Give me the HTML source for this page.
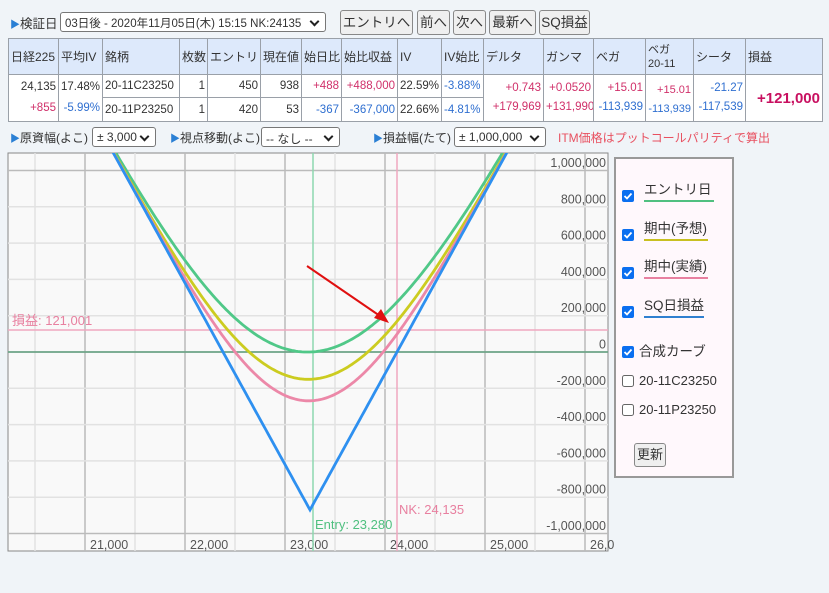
<!DOCTYPE html><html><head><meta charset="utf-8"><style>
*{box-sizing:border-box;margin:0;padding:0}
body{width:829px;height:593px;background:#f0f4f8;font-family:"Liberation Sans","Noto Sans CJK JP",sans-serif;font-size:12.5px;color:#333;position:relative;overflow:hidden}
.a{position:absolute;white-space:nowrap}
.tri{color:#2a7fd4;font-size:10px}
.sel{position:absolute;border:1px solid #777;border-radius:3px;background:#fff;height:20px;font-size:12px;padding:2px 4px;white-space:nowrap;overflow:hidden}
.sel:after{content:"";position:absolute;right:7px;top:5px;width:5px;height:5px;border-right:2px solid #222;border-bottom:2px solid #222;transform:rotate(45deg)}
.btn{position:absolute;border:1px solid #888;border-radius:3px;background:#efefef;height:25px;font-size:13.5px;text-align:center;line-height:23px;white-space:nowrap;overflow:hidden}
table{position:absolute;left:8px;top:38px;border-collapse:collapse;font-size:11.5px;background:#fff;table-layout:fixed;width:814px}
td,th{border:1px solid #9aa0a8;font-weight:normal;padding:0 2px;white-space:nowrap;overflow:hidden}
th{background:#dde9fb;text-align:left;height:36px;font-size:12px}
td{height:23px;text-align:right}
.r{color:#d0306a}.b{color:#2f6fd0}
</style></head><body>
<div class="a" style="left:10px;top:13px"><span class="tri">▶</span>検証日</div>
<div class="sel" style="left:60px;top:12px;width:266px;font-size:11.5px">03日後 - 2020年11月05日(木) 15:15 NK:24135</div>
<div class="btn" style="left:340px;top:10px;width:73px">エントリへ</div>
<div class="btn" style="left:417px;top:10px;width:33px">前へ</div>
<div class="btn" style="left:453px;top:10px;width:33px">次へ</div>
<div class="btn" style="left:489px;top:10px;width:47px">最新へ</div>
<div class="btn" style="left:539px;top:10px;width:51px">SQ損益</div>
<table>
<colgroup><col style="width:50px"><col style="width:44px"><col style="width:77px"><col style="width:28px"><col style="width:53px"><col style="width:41px"><col style="width:40px"><col style="width:56px"><col style="width:44px"><col style="width:42px"><col style="width:60px"><col style="width:50px"><col style="width:52px"><col style="width:48px"><col style="width:52px"><col style="width:77px"></colgroup>
<tr><th>日経225</th><th>平均IV</th><th>銘柄</th><th>枚数</th><th>エントリ</th><th>現在値</th><th>始日比</th><th>始比収益</th><th>IV</th><th>IV始比</th><th>デルタ</th><th>ガンマ</th><th>ベガ</th><th style="font-size:11px;line-height:14px">ベガ<br>20-11</th><th>シータ</th><th>損益</th></tr>
<tr><td rowspan="2" style="line-height:21px">24,135<br><span class="r">+855</span></td><td rowspan="2" style="line-height:21px">17.48%<br><span class="b">-5.99%</span></td><td style="text-align:left">20-11C23250</td><td>1</td><td>450</td><td>938</td><td class="r">+488</td><td class="r">+488,000</td><td>22.59%</td><td class="b" style="text-align:left">-3.88%</td><td rowspan="2" style="line-height:19px"><span class="r">+0.743</span><br><span class="r">+179,969</span></td><td rowspan="2" style="line-height:19px"><span class="r">+0.0520</span><br><span class="r">+131,990</span></td><td rowspan="2" style="line-height:19px"><span class="r">+15.01</span><br><span class="b">-113,939</span></td><td rowspan="2" style="line-height:19px;font-size:11px;padding-top:4px"><span class="r">+15.01</span><br><span class="b">-113,939</span></td><td rowspan="2" style="line-height:19px"><span class="b">-21.27</span><br><span class="b">-117,539</span></td><td rowspan="2" class="r" style="font-size:15px;font-weight:bold;color:#c81060">+121,000</td></tr>
<tr><td style="text-align:left;height:24px">20-11P23250</td><td>1</td><td>420</td><td>53</td><td class="b">-367</td><td class="b">-367,000</td><td>22.66%</td><td class="b" style="text-align:left">-4.81%</td></tr>
</table>
<div class="a" style="left:10px;top:129px;font-size:12px"><span class="tri">▶</span>原資幅(よこ)</div>
<div class="sel" style="left:92px;top:127px;width:64px">± 3,000</div>
<div class="a" style="left:170px;top:129px;font-size:12px"><span class="tri">▶</span>視点移動(よこ)</div>
<div class="sel" style="left:261px;top:127px;width:79px">-- なし --</div>
<div class="a" style="left:373px;top:129px;font-size:12px"><span class="tri">▶</span>損益幅(たて)</div>
<div class="sel" style="left:454px;top:127px;width:92px">± 1,000,000</div>
<div class="a" style="left:558px;top:129px;color:#e85060;font-size:12px">ITM価格はプットコールパリティで算出</div>
<svg class="a" style="left:0;top:0" width="829" height="593" id="ch">
<defs><clipPath id="cp"><rect x="8" y="153" width="600" height="398"/></clipPath></defs>
<rect x="8" y="153" width="600" height="398" fill="#f9f9f9" stroke="#888"/>
<g id="grid"></g>
<g font-size="12.5" fill="#555" text-anchor="end" font-family="Liberation Sans,sans-serif" id="yl"></g>
<g font-size="12.5" fill="#555" font-family="Liberation Sans,sans-serif" id="xl"></g>
<line x1="8" x2="608" y1="330" y2="330" stroke="#f0a8c0" stroke-width="1.5"/>
<line x1="8" x2="608" y1="352" y2="352" stroke="#5a9a78" stroke-width="1.5"/>
<line x1="313" x2="313" y1="153" y2="551" stroke="#8ed8b0" stroke-width="1.5"/>
<line x1="397" x2="397" y1="153" y2="551" stroke="#f0a8c0" stroke-width="1.5"/>
<g id="cv" fill="none" stroke-width="2.8" clip-path="url(#cp)"></g>
<text x="12" y="325" fill="#e880a0" font-size="13">損益: 121,001</text>
<text x="399" y="514" fill="#e880a0" font-size="13">NK: 24,135</text>
<text x="315" y="529" fill="#50c080" font-size="13">Entry: 23,280</text>
<line x1="307" y1="266" x2="380" y2="316" stroke="#e01010" stroke-width="2"/>
<polygon points="389,323 374,318 381,309" fill="#e01010"/>
</svg>
<div class="a" style="left:614px;top:157px;width:120px;height:321px;background:#fff8fc;border:2px solid #999"></div>
<svg class="a" style="left:0;top:0" width="829" height="593" font-size="13.5" fill="#333" font-family="Liberation Sans,Noto Sans CJK JP,sans-serif">
<g id="lg"></g>
</svg>
<div class="btn" style="left:634px;top:443px;width:32px;height:24px;font-size:13px;line-height:22px">更新</div>
<script>
var g=document.getElementById('grid'),s='';
for(var i=0;i<12;i++){var x=35+i*50;if(x>608)break;s+='<line x1="'+x+'" x2="'+x+'" y1="153" y2="551" stroke="'+(i%2?'#bbb':'#e2e2e2')+'" stroke-width="1.5"/>';}
for(var j=0;j<=10;j++){var y=170.5+j*36.3;s+='<line x1="8" x2="608" y1="'+y+'" y2="'+y+'" stroke="'+((j==0||j==10)?'#bbb':'#e2e2e2')+'" stroke-width="1.5"/>';}
g.innerHTML=s;
var yl=['1,000,000','800,000','600,000','400,000','200,000','0','-200,000','-400,000','-600,000','-800,000','-1,000,000'],t='';
for(j=0;j<11;j++)t+='<text x="606" y="'+(167+j*36.3)+'">'+yl[j]+'</text>';
document.getElementById('yl').innerHTML=t;
var xl=['21,000','22,000','23,000','24,000','25,000','26,0'];t='';
for(i=0;i<6;i++)t+='<text x="'+(90+i*100)+'" y="549">'+xl[i]+'</text>';
document.getElementById('xl').innerHTML=t;
function N(x){var k=1/(1+0.2316419*Math.abs(x)),p=1-Math.exp(-x*x/2)/Math.sqrt(2*Math.PI)*k*(0.31938153+k*(-0.356563782+k*(1.781477937+k*(-1.821255978+k*1.330274429))));return x>=0?p:1-p}
function str(S,K,v){if(v==0)return Math.abs(S-K);var d1=(Math.log(S/K)+v*v/2)/v,d2=d1-v;var c=S*N(d1)-K*N(d2);return c+(c-S+K)}
var K=23250,cv='';
[[0.0469,'#50c888'],[0.0388,'#cccc20'],[0.0324,'#ec88a8'],[0,'#2e90f0']].forEach(function(o){var pts=[];for(var x=8;x<=608;x+=2){var S=23000+(x-285)*10;var y=352-(str(S,K,o[0])-870)*0.1815;if(y<100)y=100;pts.push(x+','+y.toFixed(1));}
cv+='<polyline points="'+pts.join(' ')+'" stroke="'+o[1]+'"/>';});
document.getElementById('cv').innerHTML=cv;
var L=[['エントリ日','#50c080',196,714],['期中(予想)','#c8c020',235,708],['期中(実績)','#e880a0',273,708],['SQ日損益','#3080d0',312,704]],h='';
function cb(y,on){return on?'<rect x="622" y="'+(y-6)+'" width="12" height="12" rx="2" fill="#0a6ff0"/><path d="M624.5 '+y+' l2.5 2.5 l4.5 -5" stroke="#fff" stroke-width="1.8" fill="none"/>':'<rect x="622.5" y="'+(y-5.5)+'" width="11" height="11" rx="2" fill="#fff" stroke="#666"/>'}
L.forEach(function(l){h+=cb(l[2],1)+'<text x="644" y="'+(l[2]-2)+'">'+l[0]+'</text><line x1="644" x2="'+l[3]+'" y1="'+(l[2]+5)+'" y2="'+(l[2]+5)+'" stroke="'+l[1]+'" stroke-width="2"/>'});
h+=cb(352,1)+'<text x="639" y="356">合成カーブ</text>'+cb(381,0)+'<text x="639" y="385" font-size="13">20-11C23250</text>'+cb(410,0)+'<text x="639" y="414" font-size="13">20-11P23250</text>';
document.getElementById('lg').innerHTML=h;
</script>
</body></html>
